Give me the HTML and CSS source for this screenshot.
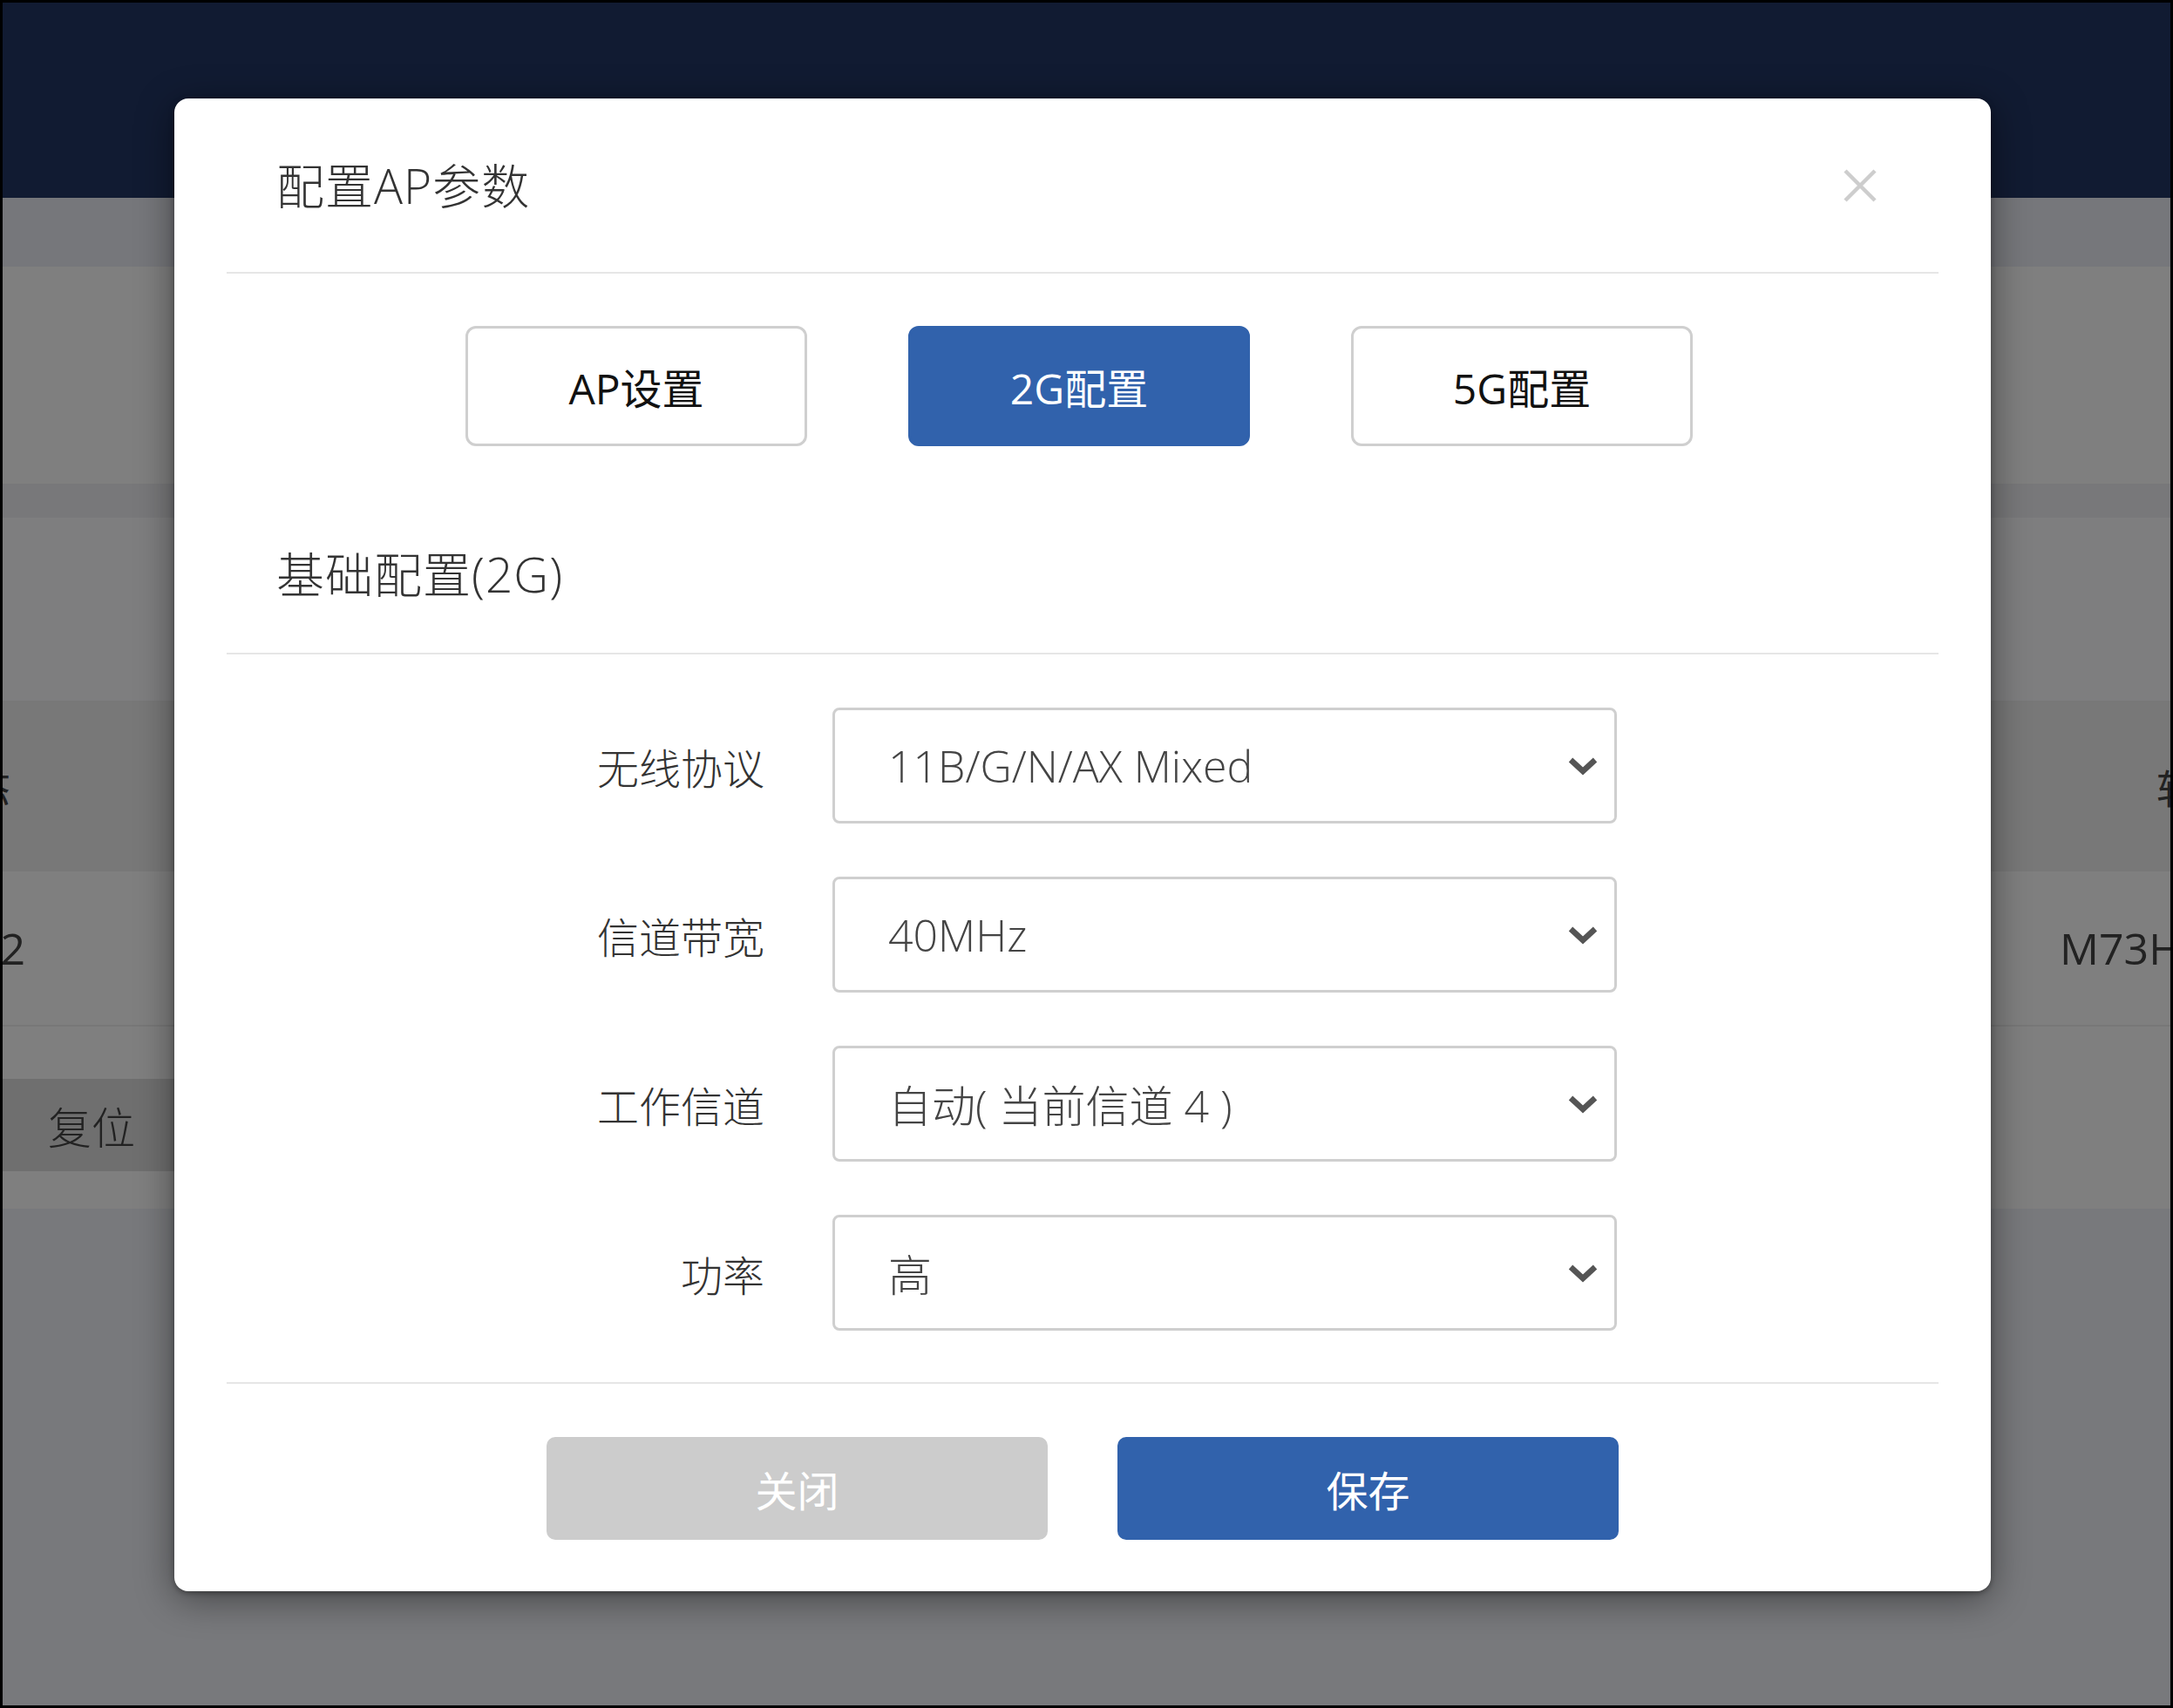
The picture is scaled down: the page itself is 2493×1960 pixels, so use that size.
FILE: index.html
```html
<!DOCTYPE html>
<html lang="zh-CN">
<head>
<meta charset="utf-8">
<title>配置AP参数</title>
<link rel="stylesheet" href="styles.css">
</head>
<body>
<div class="screen">
  <div class="page">
    <header class="topbar"></header>
    <div class="subbar"></div>
    <section class="filter"></section>
    <div class="strip"></div>
    <div class="list-top"></div>
    <div class="thead">
      <div class="cell cell-first"><span>状态</span></div>
      <div class="cell cell-last"><span>软件版本</span></div>
    </div>
    <div class="trow">
      <div class="cell cell-ip"><span>192.168.10.2</span></div>
      <div class="cell cell-model"><span>M73H-AX3000</span></div>
    </div>
    <div class="actions">
      <button class="btn-reset" type="button">复位</button>
    </div>
  </div>

  <div class="mask"></div>

  <div class="dialog">
    <div class="dialog-head">
      <h2 class="dialog-title">配置AP参数</h2>
      <button class="dialog-close" type="button" aria-label="关闭">
        <svg viewBox="0 0 40 40" width="40" height="40"><path d="M3 3L37 37M37 3L3 37" stroke="#cdcdcd" stroke-width="4.5" fill="none"/></svg>
      </button>
    </div>

    <nav class="tabs">
      <button class="tab" type="button">AP设置</button>
      <button class="tab tab-active" type="button">2G配置</button>
      <button class="tab" type="button">5G配置</button>
    </nav>

    <h3 class="section-title">基础配置(2G)</h3>

    <div class="form">
      <div class="form-row">
        <label class="form-label">无线协议</label>
        <div class="select"><span class="select-value">11B/G/N/AX Mixed</span><svg class="chev" viewBox="0 0 36 22"><path d="M4 4L18 17L32 4" fill="none" stroke="#555" stroke-width="6.5"/></svg></div>
      </div>
      <div class="form-row">
        <label class="form-label">信道带宽</label>
        <div class="select"><span class="select-value">40MHz</span><svg class="chev" viewBox="0 0 36 22"><path d="M4 4L18 17L32 4" fill="none" stroke="#555" stroke-width="6.5"/></svg></div>
      </div>
      <div class="form-row">
        <label class="form-label">工作信道</label>
        <div class="select"><span class="select-value">自动( 当前信道 4 )</span><svg class="chev" viewBox="0 0 36 22"><path d="M4 4L18 17L32 4" fill="none" stroke="#555" stroke-width="6.5"/></svg></div>
      </div>
      <div class="form-row">
        <label class="form-label">功率</label>
        <div class="select"><span class="select-value">高</span><svg class="chev" viewBox="0 0 36 22"><path d="M4 4L18 17L32 4" fill="none" stroke="#555" stroke-width="6.5"/></svg></div>
      </div>
    </div>

    <div class="dialog-foot">
      <button class="btn btn-cancel" type="button">关闭</button>
      <button class="btn btn-primary" type="button">保存</button>
    </div>
  </div>
</div>
</body>
</html>
```

FILE: styles.css
```css
* { box-sizing: border-box; }

html, body {
  margin: 0;
  padding: 0;
}

body {
  width: 2493px;
  height: 1960px;
  overflow: hidden;
  font-family: "Open Sans", "Noto Sans CJK SC", sans-serif;
}

button { font-family: inherit; cursor: pointer; }

.screen {
  position: relative;
  width: 2493px;
  height: 1960px;
  border: 3px solid #000;
  overflow: hidden;
  background: #f0f2f8;
}

/* ---- page behind the dialog ---- */
.page {
  display: flex;
  flex-direction: column;
}

.topbar { height: 224px; background: #223664; }
.subbar { height: 79px; background: #eceef6; }
.filter { height: 249px; background: #fff; }
.strip  { height: 39px; background: #f0f1f4; }
.list-top { height: 210px; background: #fcfdfe; }

.thead {
  height: 196px;
  background: #f1f1f1;
  display: flex;
  align-items: center;
  font-size: 46px;
  color: #444;
}

.trow {
  height: 178px;
  background: #fff;
  border-bottom: 2px solid #efefef;
  display: flex;
  align-items: center;
  font-size: 50px;
  color: #444;
}

.cell {
  display: flex;
  white-space: nowrap;
}

.cell-first { width: 9px; justify-content: flex-end; }
.cell-ip { width: 26px; justify-content: flex-end; }
.cell-last { margin-left: auto; width: 16px; }
.cell-model { margin-left: auto; width: 127px; }

.actions {
  height: 209px;
  background: #fff;
  padding-top: 60px;
}

.btn-reset {
  display: block;
  width: 320px;
  height: 106px;
  border: 0;
  border-radius: 0;
  background: #dedede;
  font-size: 50px;
  font-weight: 300;
  color: #444;
  text-align: left;
  padding: 0 0 0 52px;
}

.mask {
  position: absolute;
  inset: 0;
  background: rgba(0, 0, 0, 0.5);
}

/* ---- dialog ---- */
.dialog {
  position: absolute;
  left: 197px;
  top: 110px;
  width: 2084px;
  background: #fff;
  border-radius: 16px;
  padding: 0 60px;
  box-shadow: 0 8px 44px rgba(0, 0, 0, 0.45), 0 2px 6px rgba(0, 0, 0, 0.35);
}

.dialog-head {
  height: 201px;
  border-bottom: 2px solid #e6e6e6;
  display: flex;
  align-items: center;
  padding-left: 57px;
}

.dialog-title {
  margin: 0;
  font-size: 55px;
  font-weight: 300;
  letter-spacing: 1px;
  line-height: 1;
  color: #333;
}

.dialog-close {
  margin-left: auto;
  margin-right: 70px;
  width: 40px;
  height: 40px;
  padding: 0;
  border: 0;
  background: none;
  display: flex;
}

.tabs {
  display: flex;
  justify-content: center;
  gap: 116px;
  margin-top: 60px;
  padding-right: 8px;
}

.tab {
  width: 392px;
  height: 138px;
  border: 3px solid #cfcfcf;
  border-radius: 12px;
  background: #fff;
  font-size: 48px;
  color: #111;
  padding: 0;
}

.tab-active {
  background: #3162ac;
  border-color: #3162ac;
  color: #fff;
}

.section-title {
  margin: 0;
  height: 239px;
  display: flex;
  align-items: flex-end;
  padding: 0 0 55px 57px;
  font-size: 55px;
  font-weight: 300;
  letter-spacing: 1px;
  line-height: 70px;
  color: #333;
  border-bottom: 2px solid #e6e6e6;
}

.form {
  display: flex;
  flex-direction: column;
  gap: 61px;
  padding: 61px 0 59px;
  border-bottom: 2px solid #e6e6e6;
}

.form-row {
  display: flex;
  align-items: center;
  height: 133px;
}

.form-label {
  width: 617px;
  margin-right: 78px;
  text-align: right;
  font-size: 48px;
  font-weight: 300;
  color: #333;
}

.select {
  width: 900px;
  height: 133px;
  border: 3px solid #cfcfcf;
  border-radius: 8px;
  background: #fff;
  display: flex;
  align-items: center;
  padding: 0 18px 0 61px;
  font-size: 50px;
  font-weight: 300;
  color: #444;
}

.select-value { flex: 1; white-space: pre; }

.chev {
  width: 36px;
  height: 22px;
  flex: none;
}

.dialog-foot {
  display: flex;
  justify-content: center;
  gap: 80px;
  padding: 61px 0 59px;
}

.btn {
  width: 575px;
  height: 118px;
  border: 0;
  border-radius: 10px;
  font-size: 48px;
  color: #fff;
  padding: 0;
}

.btn-cancel { background: #cccccc; }
.btn-primary { background: #3162ac; }
```
